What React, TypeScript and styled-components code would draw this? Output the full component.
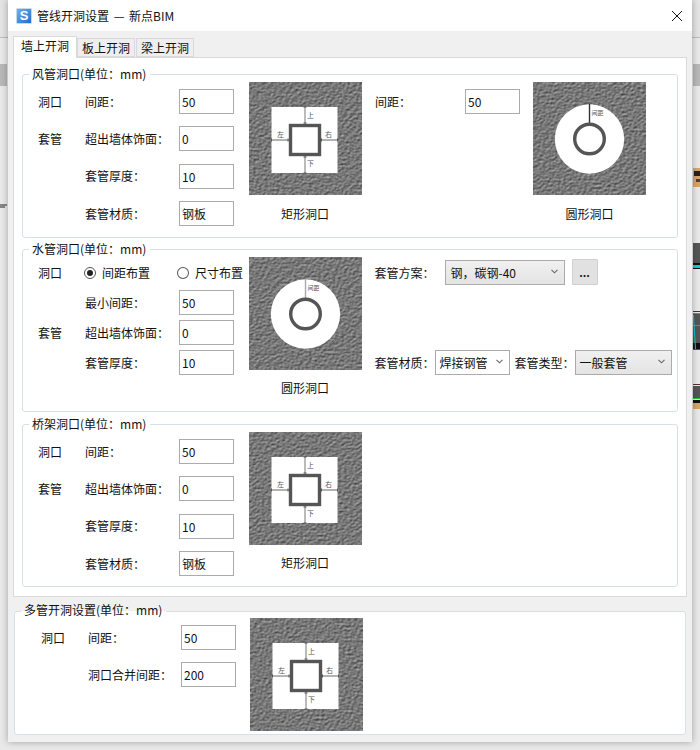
import React, { useId } from "react";
import styled, { createGlobalStyle } from "styled-components";

const Global = createGlobalStyle`
  html, body { margin: 0; padding: 0; background: #e6e6e6; }
  * { box-sizing: border-box; }
`;

const Desktop = styled.div`
  position: relative;
  width: 700px;
  height: 750px;
  padding: 0 8px 8px;
  overflow: hidden;
  background: linear-gradient(#e4e4e4 0 37px, #bdbdbd 37px 38px, #e9e9e9 38px);
  font-family: "Noto Sans CJK SC", "Noto Sans", sans-serif;
  font-size: 12px;
  color: #111;
`;
const Thumb = styled.div<{ $side: "left" | "right" }>`
  position: absolute;
  top: 64px;
  ${(p) => (p.$side === "left" ? "left: 0;" : "right: 0;")}
  width: 7px;
  height: 22px;
  background: #b8b8b8;
`;
const CadScrap = styled.svg`
  position: absolute;
  top: 160px;
  right: 0;
`;
const LeftMark = styled.svg`
  position: absolute;
  top: 202px;
  left: 0;
`;
const Win = styled.div`
  position: relative;
  z-index: 1;
  width: 684px;
  height: 742px;
  background: #f0f0f0;
  box-shadow: 0 0 7px rgba(0, 0, 0, 0.32);
`;
const TitleBar = styled.div`
  height: 31px;
  background: #fff;
  display: flex;
  align-items: center;
  padding: 0 10px 0 8px;
  gap: 5px;
`;
const Logo = styled.div`
  width: 16px;
  height: 16px;
  border-radius: 1px;
  background: linear-gradient(135deg, #6fb1ee, #1c6fd0);
  border: 1px solid #c4d8ee;
  color: #fff;
  font: 700 13px/14px "Liberation Sans", sans-serif;
  text-align: center;
`;
const Title = styled.div`
  flex: 1;
  font-size: 12px;
  word-spacing: 2px;
  line-height: 16px;
`;
const CloseIcon = styled.svg`
  display: block;
`;
const TabStrip = styled.div`
  display: flex;
  margin: 5px 0 0 5px;
  height: 21px;
  align-items: flex-end;
`;
const Tab = styled.div<{ $active?: boolean }>`
  position: relative;
  height: ${(p) => (p.$active ? "22px" : "19px")};
  width: ${(p) => (p.$active ? "64px" : "58px")};
  margin-right: ${(p) => (p.$active ? "0" : "1px")};
  margin-bottom: ${(p) => (p.$active ? "-1px" : "0")};
  background: ${(p) => (p.$active ? "#fff" : "#eeeeee")};
  border: 1px solid #d9d9d9;
  border-bottom: ${(p) => (p.$active ? "none" : "1px solid #d9d9d9")};
  z-index: ${(p) => (p.$active ? 2 : 0)};
  text-align: center;
  line-height: 18px;
`;
const Panel = styled.div`
  margin: 0 5px 0 5px;
  height: 540px;
  background: #fff;
  border: 1px solid #d9d9d9;
  padding: 16px 8px 0;
  display: flex;
  flex-direction: column;
`;
const Group = styled.div<{ $gap?: number; $h?: number }>`
  position: relative;
  display: flex;
  align-items: flex-start;
  flex: none;
  height: ${(p) => p.$h ?? 163}px;
  border: 1px solid #d6e0e8;
  border-radius: 3px;
  padding: 7px 15px 0;
  margin-top: ${(p) => p.$gap ?? 0}px;
  background: #fff;
`;
const MultiGroup = styled(Group)`
  margin: 14px 6px 0 6px;
  padding: 6px 14px 0 26px;
`;
const Legend = styled.div`
  position: absolute;
  top: -9px;
  left: 6px;
  padding: 0 4px 0 3px;
  background: #fff;
  line-height: 16px;
  white-space: nowrap;
`;
const MultiLegend = styled(Legend)`
  top: -10px;
  left: 6px;
  background: linear-gradient(#f0f0f0 0 9px, #fff 9px);
`;
const Form = styled.div<{ $top?: number; $gap?: number }>`
  display: grid;
  grid-template-columns: 47px 94px 55px;
  grid-auto-rows: 25px;
  row-gap: ${(p) => p.$gap ?? 12.4}px;
  margin-top: ${(p) => p.$top ?? 7}px;
  margin-right: 14.5px;
  align-items: center;
`;
const MultiForm = styled(Form)`
  grid-template-columns: 47px 93px 55px;
  margin-right: 14px;
`;
const SideForm = styled(Form)`
  grid-template-columns: 90px 55px;
  margin-left: 13.5px;
  margin-right: 13px;
`;
const Lab = styled.div<{ $col?: number }>`
  grid-column: ${(p) => p.$col ?? "auto"};
  line-height: 16px;
  white-space: nowrap;
`;
const Field = styled.input`
  width: 55px;
  height: 25px;
  border: 1px solid #ababab;
  background: #fff;
  padding: 0 2px;
  font: inherit;
  color: #111;
  outline: none;
`;
const RadioRow = styled.div`
  grid-column: 2 / 4;
  display: flex;
  margin-left: -1px;
  white-space: nowrap;
`;
const RadioOpt = styled.div`
  width: 93px;
  flex: none;
  display: flex;
  align-items: center;
  gap: 6px;
`;
const RadioOptLast = styled(RadioOpt)`
  width: 66px;
`;
const RadioDot = styled.span<{ $on?: boolean }>`
  width: 12px;
  height: 12px;
  border-radius: 50%;
  border: 1px solid #555;
  background: #fff;
  display: flex;
  align-items: center;
  justify-content: center;
  &::after {
    content: "";
    width: 6px;
    height: 6px;
    border-radius: 50%;
    background: ${(p) => (p.$on ? "#222" : "transparent")};
  }
`;
const Fig = styled.div<{ $gap?: number }>`
  width: 113px;
  flex: none;
  text-align: center;
  & > span {
    display: block;
    margin-top: ${(p) => p.$gap ?? 11}px;
    line-height: 16px;
  }
`;
const FigSvg = styled.svg`
  display: block;
`;
const SideCol = styled.div`
  height: 115px;
  width: 297px;
  margin: 3px 0 0 -1px;
  display: flex;
  flex-direction: column;
  justify-content: space-between;
`;
const SideRow = styled.div`
  display: flex;
  align-items: center;
  height: 25px;
`;
const SideLab = styled.div<{ $w: number; $ml?: number }>`
  width: ${(p) => p.$w}px;
  margin-left: ${(p) => p.$ml ?? 0}px;
  flex: none;
  white-space: nowrap;
`;
const Select = styled.div<{ $w: number; $plain?: boolean; $pad?: number }>`
  width: ${(p) => p.$w}px;
  height: 25px;
  flex: none;
  border: 1px solid #ababab;
  background: ${(p) => (p.$plain ? "#fff" : "linear-gradient(#f0f0f0, #e4e4e4)")};
  display: flex;
  align-items: center;
  justify-content: space-between;
  padding: 0 6px 0 ${(p) => p.$pad ?? 4}px;
  white-space: nowrap;
`;
const Chevron = styled.svg`
  flex: none;
  margin-top: -3px;
`;
const DotsBtn = styled.div`
  width: 26px;
  height: 26px;
  margin: -1px 0 0 7px;
  background: #e1e1e1;
  border: 1px solid #d0d0d0;
  border-radius: 1px;
  text-align: center;
  line-height: 24px;
  font-weight: 700;
  font-size: 11px;
`;

const W = 113;

function Wall({ seed, children }: { seed: number; children: React.ReactNode }) {
  const id = useId().replace(/:/g, "");
  return (
    <FigSvg width={W} height={W} viewBox={`0 0 ${W} ${W}`}>
      <defs>
        <filter id={id} x="0" y="0" width="100%" height="100%" colorInterpolationFilters="sRGB">
          <feTurbulence type="fractalNoise" baseFrequency="0.34 0.46" numOctaves={2} seed={seed} />
          <feDiffuseLighting surfaceScale={0.5} lightingColor="#ffffff" diffuseConstant={1}>
            <feDistantLight azimuth={235} elevation={28} />
          </feDiffuseLighting>
        </filter>
      </defs>
      <rect width={W} height={W} fill="#777" filter={`url(#${id})`} />
      {children}
    </FigSvg>
  );
}

const tiny = { fontFamily: '"Noto Sans CJK SC", sans-serif', fill: "#555" };

function RectHole({ seed }: { seed: number }) {
  return (
    <Wall seed={seed}>
      <rect x={22.5} y={25} width={66} height={66} fill="#fff" />
      <line x1={56} y1={25} x2={56} y2={42} stroke="#aaa" strokeWidth={1.6} />
      <line x1={56} y1={74} x2={56} y2={91} stroke="#aaa" strokeWidth={1.6} />
      <line x1={22.5} y1={58} x2={40} y2={58} stroke="#666" strokeWidth={1} />
      <line x1={72} y1={58} x2={88.5} y2={58} stroke="#666" strokeWidth={1} />
      <rect x={41.5} y={43.5} width={29} height={29} fill="#fff" stroke="#555" strokeWidth={3.4} />
      <path d="M54.5 25h3M54.5 41h3M54.5 75h3M54.5 91h3M22.5 56.500v3M39 56.500v3M72.500 56.500v3M88.500 56.500v3" stroke="#555" strokeWidth={1} />
      <text x={58} y={36} fontSize={7} style={tiny}>上</text>
      <text x={58} y={84} fontSize={7} style={tiny}>下</text>
      <text x={28} y={55} fontSize={7} style={tiny}>左</text>
      <text x={76} y={55} fontSize={7} style={tiny}>右</text>
    </Wall>
  );
}

function RoundHole({ seed, line }: { seed: number; line: string }) {
  return (
    <Wall seed={seed}>
      <circle cx={56.500} cy={57} r={34.7} fill="#fff" />
      <line x1={56.500} y1={22} x2={56.500} y2={41} stroke={line} strokeWidth={1.4} />
      <circle cx={56.500} cy={57} r={14.800} fill="#fff" stroke="#555" strokeWidth={3.400} />
      <text x={58.500} y={33} fontSize={6} style={tiny}>间距</text>
    </Wall>
  );
}

const Val = ({ v }: { v: string }) => <Field readOnly value={v} />;

function WallForm() {
  return (
    <Form>
      <Lab>洞口</Lab>
      <Lab>间距：</Lab>
      <Val v="50" />
      <Lab>套管</Lab>
      <Lab>超出墙体饰面：</Lab>
      <Val v="0" />
      <Lab $col={2}>套管厚度：</Lab>
      <Val v="10" />
      <Lab $col={2}>套管材质：</Lab>
      <Val v="钢板" />
    </Form>
  );
}

const Down = () => (
  <Chevron width="7" height="5" viewBox="0 0 7 5">
    <path d="M0.500 0.800l3 3 3-3" fill="none" stroke="#666" strokeWidth="1.100" />
  </Chevron>
);

export default function App() {
  return (
    <>
      <Global />
      <Desktop>
        <Thumb $side="left" />
        <Thumb $side="right" />
        <LeftMark width="8" height="8" viewBox="0 0 8 8">
          <path d="M0 3h7M0 5h5" stroke="#222" strokeWidth="1" />
        </LeftMark>
        <CadScrap width="7" height="260" viewBox="0 0 7 260">
          <rect x="0" y="8" width="7" height="19" fill="#d9a468" />
          <rect x="1" y="11" width="6" height="5" fill="#222" />
          <rect x="3" y="19" width="4" height="3" fill="#444" />
          <rect x="0" y="83" width="7" height="20" fill="#555" />
          <rect x="0" y="103" width="7" height="6" fill="#111" />
          <rect x="0" y="105" width="7" height="3" fill="#16c9d6" />
          <rect x="0" y="151" width="7" height="1" fill="#5a2d35" />
          <rect x="0" y="153" width="7" height="1" fill="#22c322" />
          <rect x="0" y="154" width="7" height="36" fill="#555" />
          <rect x="0" y="165" width="7" height="1" fill="#22c322" />
          <rect x="0" y="183" width="7" height="6" fill="#111" />
          <path d="M0.500 155l2 34" stroke="#16c9d6" strokeWidth="1" fill="none" />
          <rect x="0" y="224" width="7" height="1" fill="#5a2d35" />
          <rect x="0" y="226" width="7" height="13" fill="#555" />
          <rect x="0" y="238" width="7" height="1" fill="#22c322" />
          <rect x="0" y="240" width="7" height="3" fill="#111" />
          <rect x="0" y="243" width="7" height="6" fill="#d9a468" />
        </CadScrap>
        <Win>
          <TitleBar>
            <Logo>S</Logo>
            <Title>管线开洞设置 — 新点BIM</Title>
            <CloseIcon width="10" height="10" viewBox="0 0 10 10">
              <path d="M0 0l10 10M10 0L0 10" stroke="#111" strokeWidth="1" />
            </CloseIcon>
          </TitleBar>
          <TabStrip>
            <Tab $active>墙上开洞</Tab>
            <Tab>板上开洞</Tab>
            <Tab>梁上开洞</Tab>
          </TabStrip>
          <Panel>
            <Group $h={164}>
              <Legend>风管洞口(单位：mm)</Legend>
              <WallForm />
              <Fig>
                <RectHole seed={3} />
                <span>矩形洞口</span>
              </Fig>
              <SideForm>
                <Lab>间距：</Lab>
                <Val v="50" />
              </SideForm>
              <Fig>
                <RoundHole seed={7} line="#333" />
                <span>圆形洞口</span>
              </Fig>
            </Group>
            <Group $gap={11}>
              <Legend>水管洞口(单位：mm)</Legend>
              <Form $top={3} $gap={5}>
                <Lab>洞口</Lab>
                <RadioRow>
                  <RadioOpt>
                    <RadioDot $on />
                    间距布置
                  </RadioOpt>
                  <RadioOptLast>
                    <RadioDot />
                    尺寸布置
                  </RadioOptLast>
                </RadioRow>
                <Lab $col={2}>最小间距：</Lab>
                <Val v="50" />
                <Lab>套管</Lab>
                <Lab>超出墙体饰面：</Lab>
                <Val v="0" />
                <Lab $col={2}>套管厚度：</Lab>
                <Val v="10" />
              </Form>
              <Fig $gap={10}>
                <RoundHole seed={11} line="#aaa" />
                <span>圆形洞口</span>
              </Fig>
              <SideCol>
                <SideRow>
                  <SideLab $w={70} $ml={14}>套管方案：</SideLab>
                  <Select $w={120} $pad={5}>
                    钢，碳钢-40
                    <Down />
                  </Select>
                  <DotsBtn>...</DotsBtn>
                </SideRow>
                <SideRow>
                  <SideLab $w={60} $ml={14}>套管材质：</SideLab>
                  <Select $w={75} $plain>
                    焊接钢管
                    <Down />
                  </Select>
                  <SideLab $w={60} $ml={5}>套管类型：</SideLab>
                  <Select $w={97}>
                    一般套管
                    <Down />
                  </Select>
                </SideRow>
              </SideCol>
            </Group>
            <Group $gap={12}>
              <Legend>桥架洞口(单位：mm)</Legend>
              <WallForm />
              <Fig $gap={10}>
                <RectHole seed={5} />
                <span>矩形洞口</span>
              </Fig>
            </Group>
          </Panel>
          <MultiGroup $h={124}>
            <MultiLegend>多管开洞设置(单位：mm)</MultiLegend>
            <MultiForm $gap={12}>
              <Lab>洞口</Lab>
              <Lab>间距：</Lab>
              <Val v="50" />
              <Lab $col={2}>洞口合并间距：</Lab>
              <Val v="200" />
            </MultiForm>
            <Fig>
              <RectHole seed={9} />
            </Fig>
          </MultiGroup>
        </Win>
      </Desktop>
    </>
  );
}
